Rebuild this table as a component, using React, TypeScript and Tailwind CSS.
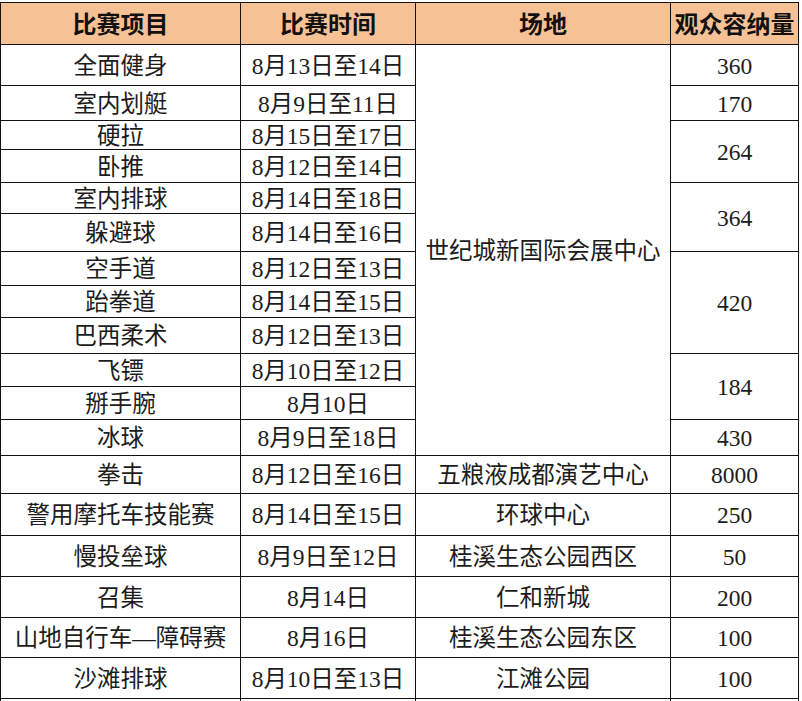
import React from "react";

type Row = {
    name: string;
    date: string;
    cap?: { text: string; span: 1 | 2 | 3 };
};

const SPAN: Record<number, string> = {
    1: "row-span-1",
    2: "row-span-2",
    3: "row-span-3",
};

const ROWS: Row[] = [
    { name: "全面健身", date: "8月13日至14日", cap: { text: "360", span: 1 } },
    { name: "室内划艇", date: "8月9日至11日", cap: { text: "170", span: 1 } },
    { name: "硬拉", date: "8月15日至17日", cap: { text: "264", span: 2 } },
    { name: "卧推", date: "8月12日至14日" },
    { name: "室内排球", date: "8月14日至18日", cap: { text: "364", span: 2 } },
    { name: "躲避球", date: "8月14日至16日" },
    { name: "空手道", date: "8月12日至13日", cap: { text: "420", span: 3 } },
    { name: "跆拳道", date: "8月14日至15日" },
    { name: "巴西柔术", date: "8月12日至13日" },
    { name: "飞镖", date: "8月10日至12日", cap: { text: "184", span: 2 } },
    { name: "掰手腕", date: "8月10日" },
    { name: "冰球", date: "8月9日至18日", cap: { text: "430", span: 1 } },
];

const OTHERS = [
    { name: "拳击", date: "8月12日至16日", venue: "五粮液成都演艺中心", cap: "8000" },
    { name: "警用摩托车技能赛", date: "8月14日至15日", venue: "环球中心", cap: "250" },
    { name: "慢投垒球", date: "8月9日至12日", venue: "桂溪生态公园西区", cap: "50" },
    { name: "召集", date: "8月14日", venue: "仁和新城", cap: "200" },
    { name: "山地自行车—障碍赛", date: "8月16日", venue: "桂溪生态公园东区", cap: "100" },
    { name: "沙滩排球", date: "8月10日至13日", venue: "江滩公园", cap: "100" },
];

const cell = "flex items-center justify-center whitespace-nowrap border-r border-b border-[#111] pt-[3px]";

export default function App() {
    return (
        <div className="h-[701px] w-[802px] overflow-hidden bg-white pt-[2px] font-['Liberation_Serif','Noto_Sans_CJK_SC',serif] text-[23.5px] leading-none text-[#1c1c1c]">
            <div className="grid w-[799px] grid-cols-[240px_175px_255px_128px] grid-rows-[42px_41px_35px_29px_33px_31px_38px_34px_32px_36px_33px_33px_36px_38px_42px_41px_41px_40px_41px_41px] border-l border-t border-[#111]">
                {/* header */}
                {["比赛项目", "比赛时间", "场地", "观众容纳量"].map((h) => (
                    <div key={h} className={`${cell} bg-[#f7c196] text-[24px] font-bold text-[#111]`}>
                        {h}
                    </div>
                ))}

                {/* 世纪城 block */}
                {ROWS.map((r, i) => (
                    <React.Fragment key={r.name}>
                        <div className={cell}>{r.name}</div>
                        <div className={cell}>{r.date}</div>
                        {i === 0 && <div className={`${cell} row-span-12`}>世纪城新国际会展中心</div>}
                        {r.cap && <div className={`${cell} ${SPAN[r.cap.span]}`}>{r.cap.text}</div>}
                    </React.Fragment>
                ))}

                {OTHERS.map((r) => (
                    <React.Fragment key={r.name}>
                        <div className={cell}>{r.name}</div>
                        <div className={cell}>{r.date}</div>
                        <div className={cell}>{r.venue}</div>
                        <div className={cell}>{r.cap}</div>
                    </React.Fragment>
                ))}

                {/* next row, cut off at the bottom */}
                <div className={cell} />
                <div className={cell} />
                <div className={cell} />
                <div className={cell} />
            </div>
        </div>
    );
}
